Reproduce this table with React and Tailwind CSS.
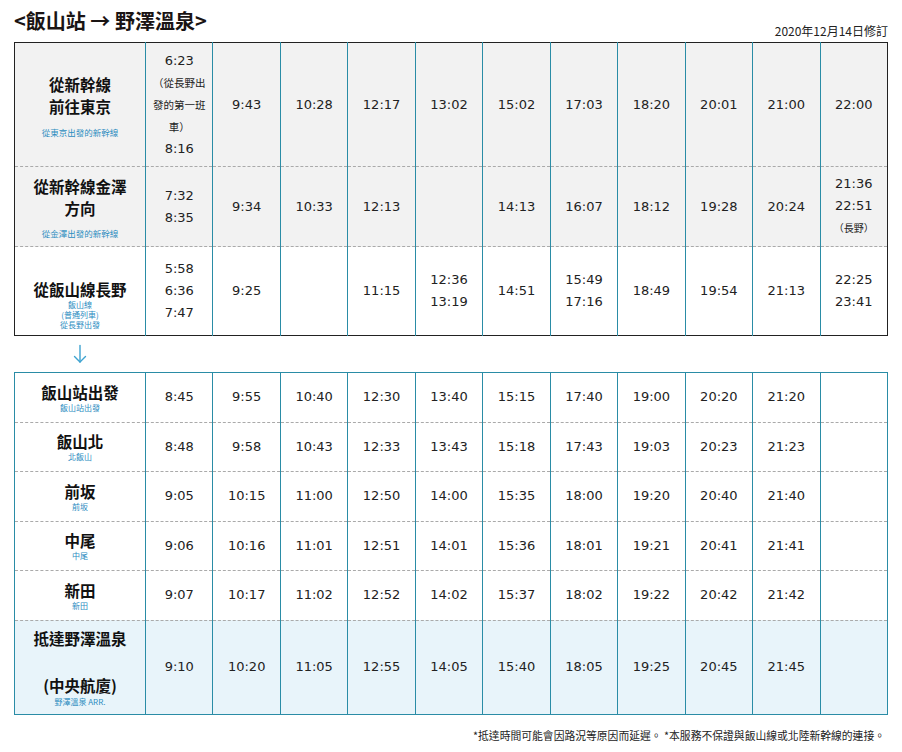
import React from "react";

const time = "font-['DejaVu_Sans','Noto_Sans_CJK_TC',sans-serif] text-[13px] text-[#222]";
const cjk = "font-['Noto_Sans_CJK_TC',sans-serif]";

const topRows = [
  {
    bg: "bg-[#f2f2f2]",
    h: "h-[124px]",
    name: (
      <div className="flex flex-col items-center">
        <div className="text-[15.5px] leading-[22px] font-bold">從新幹線</div>
        <div className="text-[15.5px] leading-[22px] font-bold">前往東京</div>
        <div className="mt-[10px] text-[8.5px] leading-[10px] text-[#2b8cbf] font-normal">從東京出發的新幹線</div>
      </div>
    ),
    times: [
      [
        "6:23",
        <span key="a" className="text-[10.5px]">（從長野出</span>,
        <span key="b" className="text-[10.5px]">發的第一班</span>,
        <span key="c" className="text-[10.5px]">車）</span>,
        "8:16",
      ],
      ["9:43"], ["10:28"], ["12:17"], ["13:02"], ["15:02"], ["17:03"], ["18:20"], ["20:01"], ["21:00"], ["22:00"],
    ],
  },
  {
    bg: "bg-[#f2f2f2]",
    h: "h-[80px]",
    name: (
      <div className="flex flex-col items-center">
        <div className="text-[15.5px] leading-[22px] font-bold">從新幹線金澤</div>
        <div className="text-[15.5px] leading-[22px] font-bold">方向</div>
        <div className="mt-[9px] text-[8.5px] leading-[10px] text-[#2b8cbf] font-normal">從金澤出發的新幹線</div>
      </div>
    ),
    times: [
      ["7:32", "8:35"], ["9:34"], ["10:33"], ["12:13"], [], ["14:13"], ["16:07"], ["18:12"], ["19:28"], ["20:24"],
      ["21:36", "22:51", <span key="n" className="text-[10px]">（長野）</span>],
    ],
  },
  {
    bg: "bg-white",
    h: "h-[89px]",
    name: (
      <div className="flex flex-col items-center pt-[26px]">
        <div className="text-[15.5px] leading-[22px] font-bold">從飯山線長野</div>
        <div className="text-[8px] leading-[10px] text-[#2b8cbf] font-normal">飯山線</div>
        <div className="text-[8px] leading-[10px] text-[#2b8cbf] font-normal">(普通列車)</div>
        <div className="text-[8px] leading-[10px] text-[#2b8cbf] font-normal">從長野出發</div>
      </div>
    ),
    times: [
      ["5:58", "6:36", "7:47"], ["9:25"], [], ["11:15"], ["12:36", "13:19"], ["14:51"], ["15:49", "17:16"], ["18:49"], ["19:54"], ["21:13"],
      ["22:25", "23:41"],
    ],
  },
];

const bottomRows = [
  { name: "飯山站出發", sub: "飯山站出發", times: ["8:45", "9:55", "10:40", "12:30", "13:40", "15:15", "17:40", "19:00", "20:20", "21:20", ""] },
  { name: "飯山北", sub: "北飯山", times: ["8:48", "9:58", "10:43", "12:33", "13:43", "15:18", "17:43", "19:03", "20:23", "21:23", ""] },
  { name: "前坂", sub: "前坂", times: ["9:05", "10:15", "11:00", "12:50", "14:00", "15:35", "18:00", "19:20", "20:40", "21:40", ""] },
  { name: "中尾", sub: "中尾", times: ["9:06", "10:16", "11:01", "12:51", "14:01", "15:36", "18:01", "19:21", "20:41", "21:41", ""] },
  { name: "新田", sub: "新田", times: ["9:07", "10:17", "11:02", "12:52", "14:02", "15:37", "18:02", "19:22", "20:42", "21:42", ""] },
];

const lastTimes = ["9:10", "10:20", "11:05", "12:55", "14:05", "15:40", "18:05", "19:25", "20:45", "21:45", ""];

function Cols() {
  return (
    <colgroup>
      <col className="w-[131px]" />
      {Array.from({ length: 11 }).map((_, i) => (
        <col key={i} />
      ))}
    </colgroup>
  );
}

function TimeCell({ lines }) {
  return (
    <td className="border-l border-[#2a8ca6] text-center align-middle p-0">
      <div className={`${time} flex flex-col items-center leading-[22px] whitespace-nowrap`}>
        {lines.map((l, i) => (
          <div key={i}>{l}</div>
        ))}
      </div>
    </td>
  );
}

export default function App() {
  return (
    <div className={`w-[902px] min-h-[752px] bg-white px-[14px] ${cjk} text-[#111]`}>
      <div className="flex justify-between items-end h-[42px]">
        <h1 className="self-start pt-[8px] text-[20px] leading-[26px] font-bold text-[#1a1414]">
          &lt;飯山站 → 野澤溫泉&gt;
        </h1>
        <div className="mb-[4px] text-[12px] leading-[14px] text-[#222]">2020年12月14日修訂</div>
      </div>

      <table className="w-[874px] table-fixed border-collapse border border-[#222]">
        <Cols />
        <tbody>
          {topRows.map((row, ri) => (
            <tr key={ri} className={`${row.bg} ${row.h} border-b border-dashed border-[#aaa]`}>
              <td className="text-center align-middle p-0">{row.name}</td>
              {row.times.map((t, i) => (
                <TimeCell key={i} lines={t} />
              ))}
            </tr>
          ))}
        </tbody>
      </table>

      <div className="h-[36px] w-[131px] flex items-center justify-center">
        <svg width="14" height="20" viewBox="0 0 14 20" fill="none" stroke="#3ea3d0" strokeWidth="1.4" strokeLinecap="round">
          <path d="M7 1.5v16.5" />
          <path d="M1.5 12.5 7 18l5.5-5.5" />
        </svg>
      </div>

      <table className="w-[874px] table-fixed border-collapse border border-[#2a8ca6]">
        <Cols />
        <tbody>
          {bottomRows.map((row, ri) => (
            <tr key={ri} className="h-[49.5px] border-b border-dashed border-[#aaa]">
              <td className="text-center align-middle p-0">
                <div className="flex flex-col items-center">
                  <div className="text-[15.5px] leading-[20px] font-bold">{row.name}</div>
                  <div className="text-[8px] leading-[11px] text-[#2b8cbf]">{row.sub}</div>
                </div>
              </td>
              {row.times.map((t, i) => (
                <TimeCell key={i} lines={t ? [t] : []} />
              ))}
            </tr>
          ))}
          <tr className="h-[94px] bg-[#e8f4fa]">
            <td className="text-center align-middle p-0">
              <div className="flex flex-col items-center">
                <div className="text-[15.5px] leading-[20px] font-bold">抵達野澤溫泉</div>
                <div className="mt-[26px] text-[15.5px] leading-[22px] font-bold">(中央航廈)</div>
                <div className="text-[8px] leading-[11px] text-[#2b8cbf]">野澤溫泉 ARR.</div>
              </div>
            </td>
            {lastTimes.map((t, i) => (
              <TimeCell key={i} lines={t ? [t] : []} />
            ))}
          </tr>
        </tbody>
      </table>

      <div className="flex justify-end pr-[3px] pt-[13px] text-[10.8px] leading-[14px] text-[#222]">
        *抵達時間可能會因路況等原因而延遲。 *本服務不保證與飯山線或北陸新幹線的連接。
      </div>
    </div>
  );
}
